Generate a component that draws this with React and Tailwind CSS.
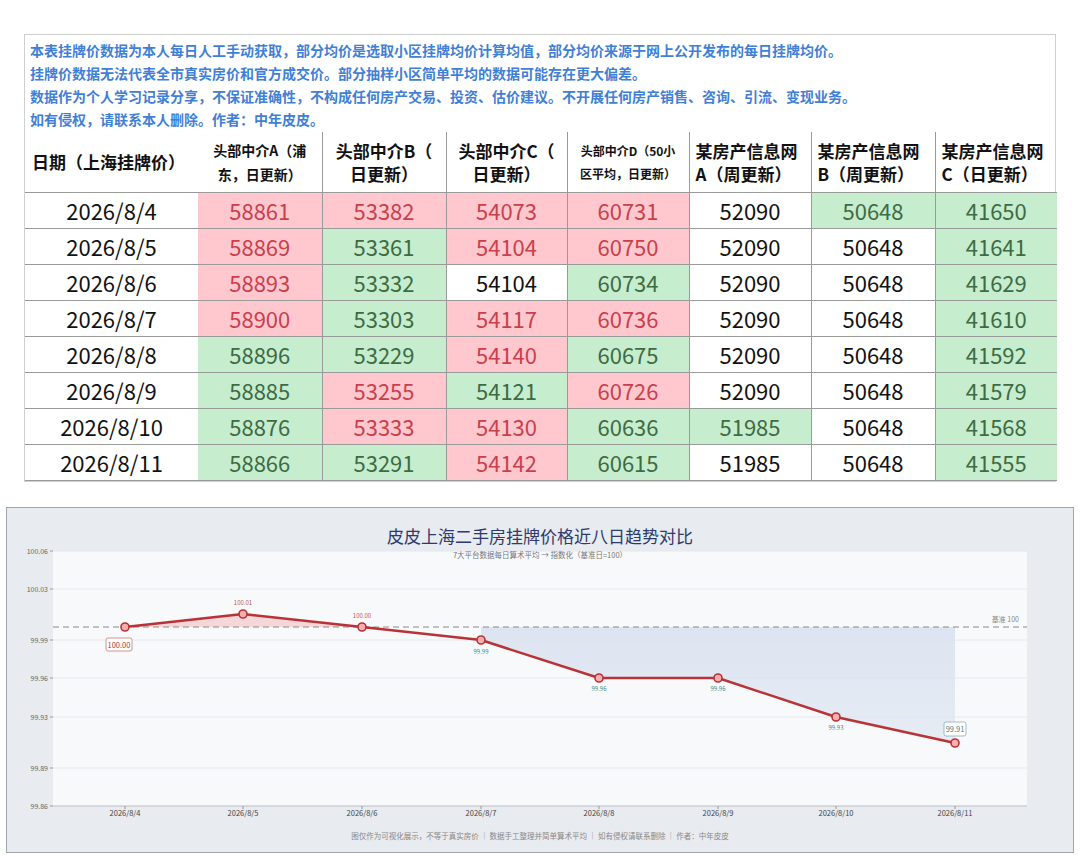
import React from 'react';

const R = 'r';
const G = 'g';
const W = 'w';

const rows = [
  ['2026/8/4', [[58861, R], [53382, R], [54073, R], [60731, R], [52090, W], [50648, G], [41650, G]]],
  ['2026/8/5', [[58869, R], [53361, G], [54104, R], [60750, R], [52090, W], [50648, W], [41641, G]]],
  ['2026/8/6', [[58893, R], [53332, G], [54104, W], [60734, G], [52090, W], [50648, W], [41629, G]]],
  ['2026/8/7', [[58900, R], [53303, G], [54117, R], [60736, R], [52090, W], [50648, W], [41610, G]]],
  ['2026/8/8', [[58896, G], [53229, G], [54140, R], [60675, G], [52090, W], [50648, W], [41592, G]]],
  ['2026/8/9', [[58885, G], [53255, R], [54121, G], [60726, R], [52090, W], [50648, W], [41579, G]]],
  ['2026/8/10', [[58876, G], [53333, R], [54130, R], [60636, G], [51985, G], [50648, W], [41568, G]]],
  ['2026/8/11', [[58866, G], [53291, G], [54142, R], [60615, G], [51985, W], [50648, W], [41555, G]]],
];

const cellTone = {
  r: 'bg-[#ffc8cf] text-[#c9404c]',
  g: 'bg-[#c7edcf] text-[#3d6b43]',
  w: 'bg-white text-[#111]',
};

const widths = ['w-[173px]', 'w-[124px]', 'w-[124px]', 'w-[121px]', 'w-[122px]', 'w-[122px]', 'w-[124px]', 'w-[122px]'];

const font = { fontFamily: '"Noto Sans CJK SC", "Noto Sans", sans-serif' };

// chart geometry (svg local coords)
const xs = [118, 236, 355, 474, 592, 711, 829, 948];
const ys = [79, 66, 79, 92, 130, 130, 169, 195];
const dates = ['2026/8/4', '2026/8/5', '2026/8/6', '2026/8/7', '2026/8/8', '2026/8/9', '2026/8/10', '2026/8/11'];
const ticks = [
  ['100.06', 3],
  ['100.03', 41],
  ['99.99', 92],
  ['99.96', 130],
  ['99.93', 169],
  ['99.89', 220],
  ['99.86', 258],
];

function Chart() {
  const line = xs.map((x, i) => `${x},${ys[i]}`).join(' ');
  const redFill = `118,79 236,66 355,79`;
  const blueFill = `474,79 474,92 592,130 711,130 829,169 948,195 948,79`;
  return (
    <svg width="1066" height="304" viewBox="0 0 1066 304" className="block" overflow="visible">
      <defs>
        <linearGradient id="bl" x1="0" y1="0" x2="0" y2="1">
          <stop offset="0" stopColor="#d9e2f0" stopOpacity="0.9" />
          <stop offset="1" stopColor="#dfe6f1" stopOpacity="0.7" />
        </linearGradient>
      </defs>
      <rect x="46" y="3" width="974" height="255" fill="#f8f9fb" />
      {ticks.map(([t, y]) => (
        <g key={t}>
          <line x1="46" x2="1020" y1={y} y2={y} stroke="#e6e8ec" strokeWidth="1" />
          <line x1="43" x2="46" y1={y} y2={y} stroke="#999" strokeWidth="1" />
          <text x="41" y={y + 2.5} fontSize="7" fill="#666" textAnchor="end">{t}</text>
        </g>
      ))}
      <line x1="46" x2="1020" y1="258" y2="258" stroke="#bfc4cc" strokeWidth="1" />
      <polygon points={redFill} fill="#f3c9cc" fillOpacity="0.7" />
      <polygon points={blueFill} fill="url(#bl)" />
      <line x1="46" x2="1020" y1="79" y2="79" stroke="#8a8a8a" strokeWidth="1" strokeDasharray="6 4" />
      <text x="1012" y="74" fontSize="7" fill="#888" textAnchor="end">基准 100</text>
      <polyline points={line} fill="none" stroke="#b83236" strokeWidth="2.5" strokeLinejoin="round" />
      {xs.map((x, i) => (
        <circle key={i} cx={x} cy={ys[i]} r="4" fill="#f6aeae" stroke="#b83236" strokeWidth="1.6" />
      ))}
      {/* data labels */}
      <rect x="99" y="90" width="26" height="13" rx="2" fill="#fff" stroke="#c77" strokeWidth="0.8" />
      <text x="112" y="99.5" fontSize="7.5" fill="#a33" textAnchor="middle">100.00</text>
      <text x="236" y="57" fontSize="6" fill="#b55" textAnchor="middle">100.01</text>
      <text x="355" y="70" fontSize="6" fill="#b55" textAnchor="middle">100.00</text>
      <text x="474" y="106" fontSize="6" fill="#3f8a86" textAnchor="middle">99.99</text>
      <text x="592" y="143" fontSize="6" fill="#3f8a86" textAnchor="middle">99.96</text>
      <text x="711" y="143" fontSize="6" fill="#3f8a86" textAnchor="middle">99.96</text>
      <text x="829" y="182" fontSize="6" fill="#3f8a86" textAnchor="middle">99.93</text>
      <rect x="937" y="174" width="22" height="14" rx="2" fill="#fff" stroke="#8ab" strokeWidth="0.8" />
      <text x="948" y="184" fontSize="7.5" fill="#3f7f86" textAnchor="middle">99.91</text>
      {xs.map((x, i) => (
        <g key={dates[i]}>
          <line x1={x} x2={x} y1="258" y2="261" stroke="#999" strokeWidth="1" />
          <text x={x} y="268" fontSize="7.5" fill="#444" textAnchor="middle">{dates[i]}</text>
        </g>
      ))}
      <text x="533" y="291" fontSize="7.5" fill="#888" textAnchor="middle">
        图仅作为可视化展示，不等于真实房价 ｜ 数据手工整理并简单算术平均 ｜ 如有侵权请联系删除 ｜ 作者：中年皮皮
      </text>
    </svg>
  );
}

const App = () => {
  return (
    <main className="w-[1080px] h-[857px] bg-white overflow-hidden" style={font}>
      <div className="pt-[34px] pl-[24px]">
        {/* TABLE CARD */}
        <section className="w-[1032px] border border-[#cfcfcf] bg-white">
          <div className="pl-[5px] pt-[4px] pb-[1px] text-[14px] leading-[23px] font-bold text-[#3f7fd6]">
            <p>本表挂牌价数据为本人每日人工手动获取，部分均价是选取小区挂牌均价计算均值，部分均价来源于网上公开发布的每日挂牌均价。</p>
            <p>挂牌价数据无法代表全市真实房价和官方成交价。部分抽样小区简单平均的数据可能存在更大偏差。</p>
            <p>数据作为个人学习记录分享，不保证准确性，不构成任何房产交易、投资、估价建议。不开展任何房产销售、咨询、引流、变现业务。</p>
            <p>如有侵权，请联系本人删除。作者：中年皮皮。</p>
          </div>
          <table className="border-collapse table-fixed w-[1031px]">
            <thead>
              <tr className="h-[60px] text-[#111] font-bold">
                <th className={`${widths[0]} text-[17px] leading-[23px] font-bold text-left pl-[7px] border-b border-[#9a9a9a]`}>日期（上海挂牌价）</th>
                <th className={`${widths[1]} text-[14px] leading-[24px] font-bold border-b border-[#9a9a9a]`}>头部中介A（浦<br />东，日更新）</th>
                <th className={`${widths[2]} text-[17px] leading-[23px] font-bold border-b border-l border-[#9a9a9a]`}>头部中介B（<br />日更新）</th>
                <th className={`${widths[3]} text-[17px] leading-[23px] font-bold border-b border-l border-[#9a9a9a]`}>头部中介C（<br />日更新）</th>
                <th className={`${widths[4]} text-[12px] leading-[23px] font-bold border-b border-l border-[#9a9a9a]`}>头部中介D（50小<br />区平均，日更新）</th>
                <th className={`${widths[5]} text-[17px] leading-[23px] font-bold border-b border-l border-[#9a9a9a] text-left pl-[6px]`}>某房产信息网<br />A（周更新）</th>
                <th className={`${widths[6]} text-[17px] leading-[23px] font-bold border-b border-l border-[#9a9a9a] text-left pl-[6px]`}>某房产信息网<br />B（周更新）</th>
                <th className={`${widths[7]} text-[17px] leading-[23px] font-bold border-b border-l border-[#9a9a9a] text-left pl-[6px]`}>某房产信息网<br />C（日更新）</th>
              </tr>
            </thead>
            <tbody>
              {rows.map(([date, cells]) => (
                <tr key={date} className="h-[36px]">
                  <td className="p-0 text-center text-[22px] leading-[28px] text-[#111] border-b border-[#9a9a9a]">{date}</td>
                  {cells.map(([v, tone], i) => (
                    <td
                      key={i}
                      className={`p-0 text-center text-[22px] leading-[28px] border-b border-[#9a9a9a] ${i > 0 ? 'border-l' : ''} ${cellTone[tone]}`}
                    >
                      {v}
                    </td>
                  ))}
                </tr>
              ))}
            </tbody>
          </table>
        </section>
      </div>

      {/* CHART CARD */}
      <div className="pt-[25px] pl-[6px]">
        <section className="w-[1068px] h-[346px] border border-[#9ea4aa] bg-[#e8ebef]">
          <div className="h-[40px] flex items-end justify-center">
            <h2 className="text-[17px] leading-[24px] text-[#2c3a6e]">皮皮上海二手房挂牌价格近八日趋势对比</h2>
          </div>
          <div className="relative">
            <p className="absolute left-0 right-0 top-[1px] text-center text-[7.5px] text-[#777] z-10">7大平台数据每日算术平均 → 指数化（基准日=100）</p>
            <Chart />
          </div>
        </section>
      </div>
    </main>
  );
};

export default App;
